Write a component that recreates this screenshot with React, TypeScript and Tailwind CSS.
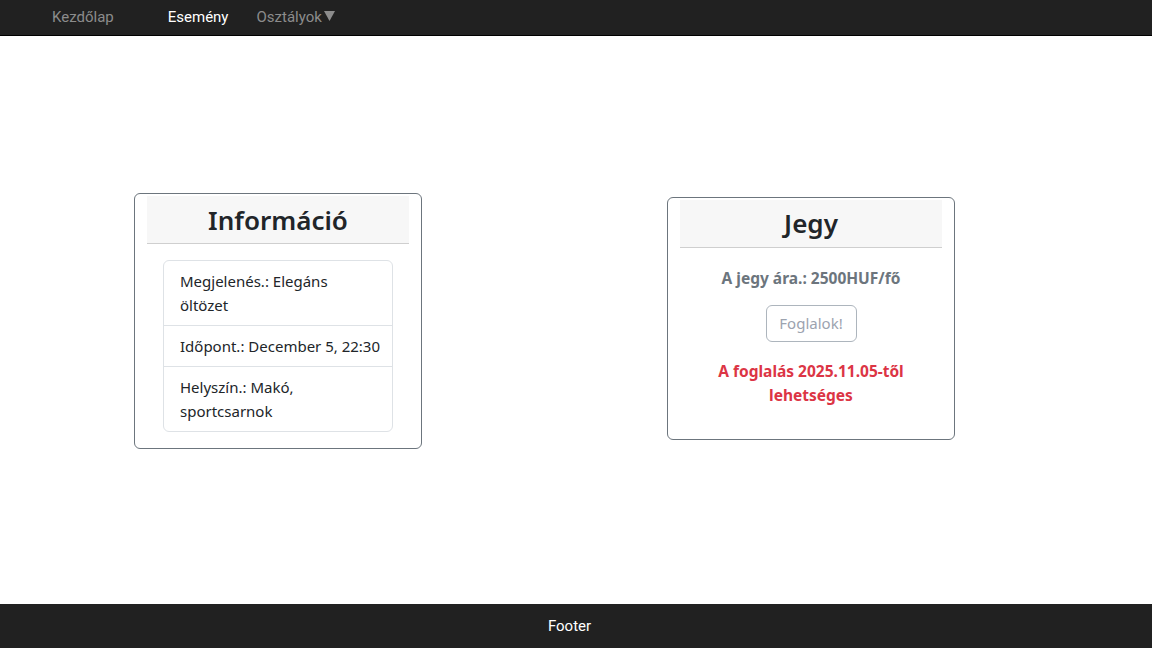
const nav = "font-['Roboto',sans-serif]";
const body = "font-['Noto_Sans','Open_Sans',sans-serif]";

const Card = ({ title, children, className = "" }: { title: string; children: React.ReactNode; className?: string }) => (
  <div className={`w-[288px] border border-[#6c757d] rounded-md px-3 pt-[2px] ${className}`}>
    <div className="h-[48px] bg-[#f7f7f7] border-b border-[#cfcfcf] flex items-center justify-center">
      <h2 className="text-[26px] font-semibold text-[#212529] leading-none">{title}</h2>
    </div>
    {children}
  </div>
);

export default function App() {
  return (
    <div className={`min-h-[648px] flex flex-col bg-white ${body}`}>
      <nav className={`h-[36px] bg-[#212121] border-b border-black flex items-center pl-[52px] text-[15px] ${nav}`}>
        <a className="text-[#8c8c8c]">Kezdőlap</a>
        <a className="ml-[54px] text-white">Esemény</a>
        <a className="ml-[28px] text-[#8c8c8c] flex items-center">
          Osztályok
          <svg width="11" height="10" viewBox="0 0 11 10" className="ml-[2px] -mt-[3px]">
            <path d="M0 0 L11 0 L5.5 10 Z" fill="#8c8c8c" />
          </svg>
        </a>
      </nav>

      <main className="flex-1 flex items-center pl-[134px] gap-[245px] text-[15px] text-[#212529]">
        <Card title="Információ" className="mt-[2px]">
          <div className="p-4">
            <ul className="border border-[#dee2e6] rounded-md leading-6">
              <li className="px-4 py-2 border-b border-[#dee2e6]">Megjelenés.: Elegáns öltözet</li>
              <li className="px-4 py-2 border-b border-[#dee2e6] whitespace-nowrap">Időpont.: December 5, 22:30</li>
              <li className="px-4 py-2">Helyszín.: Makó, sportcsarnok</li>
            </ul>
          </div>
        </Card>

        <Card title="Jegy" className="-mt-[4px]">
          <div className="pt-[18px] pb-[32px] flex flex-col items-center text-center text-[15.5px]">
            <p className="font-bold text-[#6c757d] leading-6">A jegy ára.: 2500HUF/fő</p>
            <button className="mt-[15px] h-[37px] w-[91px] border border-[#adb5bd] rounded-md text-[#9ca3af] bg-white text-[15px]">
              Foglalok!
            </button>
            <p className="mt-[17px] font-bold text-[#dc3545] leading-6 px-8">
              A foglalás 2025.11.05-től lehetséges
            </p>
          </div>
        </Card>
      </main>

      <footer className={`h-[44px] bg-[#212121] flex items-center justify-center text-white text-[15px] pr-[13px] ${nav}`}>
        Footer
      </footer>
    </div>
  );
}
